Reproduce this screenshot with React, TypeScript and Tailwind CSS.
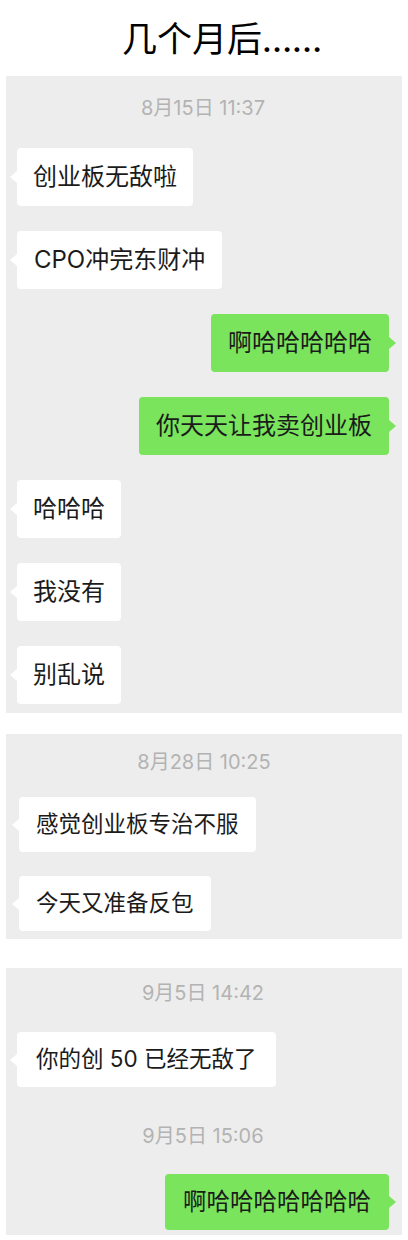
import React from "react";

const CJK = 'Inter, "Noto Sans CJK SC", "Noto Sans", sans-serif';

function Bubble({
  text,
  side,
  h,
  fs,
  px,
}: {
  text: string;
  side: "l" | "r";
  h: number;
  fs: number;
  px: number;
}) {
  const isL = side === "l";
  return (
    <div className={isL ? "flex justify-start" : "flex justify-end"}>
      <div
        className={
          "relative flex items-center rounded-[4px] leading-none text-[#1b1b1b] " +
          (isL ? "bg-white" : "bg-[#79e45c]")
        }
        style={{ height: h, fontSize: fs, paddingLeft: px, paddingRight: px, fontFamily: CJK }}
      >
        {isL ? (
          <span className="absolute left-[-7px] top-1/2 -translate-y-1/2 w-0 h-0 border-y-[6px] border-y-transparent border-r-[7px] border-r-white" />
        ) : (
          <span className="absolute right-[-7px] top-1/2 -translate-y-1/2 w-0 h-0 border-y-[6px] border-y-transparent border-l-[7px] border-l-[#79e45c]" />
        )}
        <span className="whitespace-nowrap">{text}</span>
      </div>
    </div>
  );
}

function Stamp({ t, mt = 0 }: { t: string; mt?: number }) {
  return (
    <div
      className="h-[24px] leading-[24px] text-center text-[20px] text-[#b3b3b3]"
      style={{ marginTop: mt, fontFamily: CJK }}
    >
      {t}
    </div>
  );
}

export default function App() {
  return (
    <div className="w-[408px] h-[1240px] bg-white overflow-hidden">
      <div className="h-[76px] flex items-center pl-[122px]">
        <span className="text-[35px] leading-none text-black" style={{ fontFamily: '"Noto Sans CJK SC", sans-serif', fontWeight: 400 }}>
          几个月后
          <span style={{ fontFamily: '"Liberation Serif", serif', fontSize: 30, fontWeight: 700 }}>……</span>
        </span>
      </div>

      {/* Panel 1 */}
      <div className="mx-[6px] bg-[#ededed] pt-[20px] pb-[9px] pl-[11px] pr-[13px]">
        <Stamp t="8月15日 11:37" />
        <div className="mt-[28px] flex flex-col gap-[25px]">
          <Bubble side="l" text="创业板无敌啦" h={58} fs={24} px={16} />
          <Bubble side="l" text="CPO冲完东财冲" h={58} fs={24} px={17} />
          <Bubble side="r" text="啊哈哈哈哈哈" h={58} fs={24} px={17} />
          <Bubble side="r" text="你天天让我卖创业板" h={58} fs={24} px={17} />
          <Bubble side="l" text="哈哈哈" h={58} fs={24} px={16} />
          <Bubble side="l" text="我没有" h={58} fs={24} px={16} />
          <Bubble side="l" text="别乱说" h={58} fs={24} px={16} />
        </div>
      </div>

      {/* Panel 2 */}
      <div className="mx-[6px] mt-[21px] bg-[#ededed] pt-[16px] pb-[8px] pl-[13px] pr-[13px]">
        <Stamp t="8月28日 10:25" />
        <div className="mt-[23px] flex flex-col gap-[24px]">
          <Bubble side="l" text="感觉创业板专治不服" h={55} fs={22.5} px={17} />
          <Bubble side="l" text="今天又准备反包" h={55} fs={22.5} px={17} />
        </div>
      </div>

      {/* Panel 3 */}
      <div className="mx-[6px] mt-[29px] bg-[#ededed] pt-[13px] pb-[5px] pl-[11px] pr-[13px]">
        <Stamp t="9月5日 14:42" />
        <div className="mt-[27px]">
          <Bubble side="l" text="你的创 50 已经无敌了" h={55} fs={22.5} px={19} />
        </div>
        <Stamp t="9月5日 15:06" mt={37} />
        <div className="mt-[26px]">
          <Bubble side="r" text="啊哈哈哈哈哈哈哈" h={56} fs={23.5} px={18} />
        </div>
      </div>
    </div>
  );
}
